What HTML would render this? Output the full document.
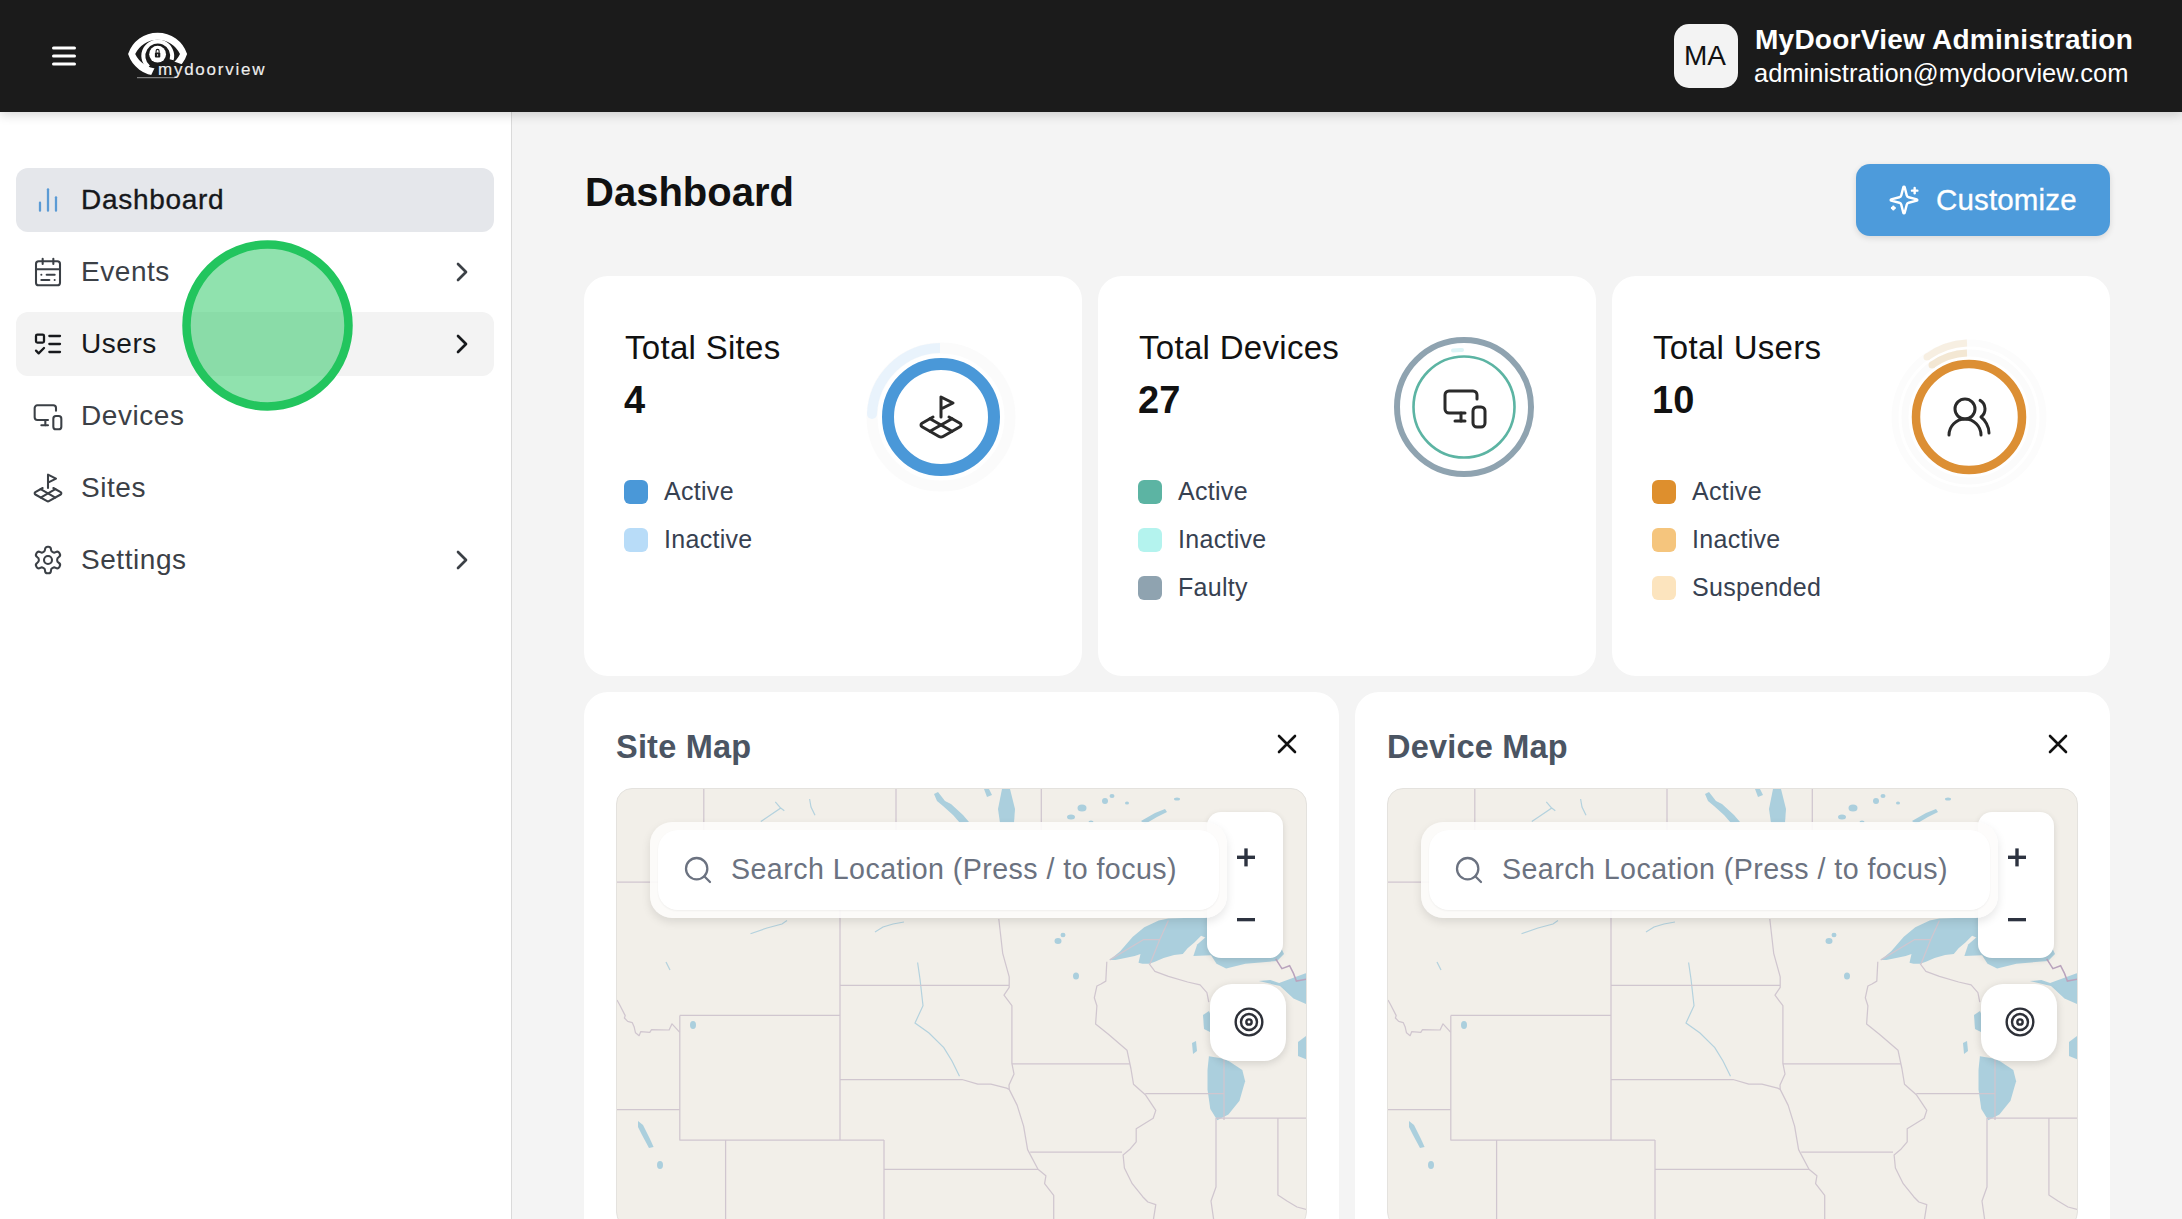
<!DOCTYPE html>
<html><head><meta charset="utf-8">
<style>
*{box-sizing:border-box;margin:0;padding:0}
html,body{width:2182px;height:1219px;overflow:hidden;background:#f4f4f4;font-family:"Liberation Sans",sans-serif}
.a{position:absolute}
.t{position:absolute;line-height:1;white-space:nowrap}
#hdr{left:0;top:0;width:2182px;height:112px;background:#1b1b1b;z-index:5;box-shadow:0 3px 10px rgba(0,0,0,.16)}
#side{left:0;top:112px;width:512px;height:1107px;background:#fff;border-right:1px solid #dadada}
.nav{left:16px;width:478px;height:64px;border-radius:12px}
.nt{font-size:28px;color:#3b4046;left:81px;letter-spacing:0.55px}
.card{background:#fff;border-radius:24px}
.ct{font-size:33px;color:#111;letter-spacing:0.3px}
.num{font-size:38px;font-weight:700;color:#111}
.sq{position:absolute;width:24px;height:24px;border-radius:6px}
.lg{font-size:25px;color:#374151;letter-spacing:0.3px}
.ic{fill:none;stroke-linecap:round;stroke-linejoin:round}
.ic *{fill:none;stroke-linecap:round;stroke-linejoin:round}
.map{position:absolute;top:788px;width:691px;height:440px;border-radius:16px;overflow:hidden;background:#f2efe9;border:1px solid #e4e2de}
.srch-o{position:absolute;top:822px;width:577px;height:96px;border-radius:22px;background:rgba(253,252,251,.9);box-shadow:0 4px 10px rgba(0,0,0,.10)}
.srch-i{position:absolute;top:830px;width:561px;height:80px;border-radius:20px;background:#fff;box-shadow:0 1px 2px rgba(0,0,0,.05)}
.zoom{position:absolute;top:812px;width:76px;height:146px;border-radius:14px;background:#fff;box-shadow:0 2px 6px rgba(0,0,0,.12)}
.loc{position:absolute;top:984px;width:76px;height:77px;border-radius:22px;background:#fff;box-shadow:0 2px 8px rgba(0,0,0,.14)}
.ph{font-size:28.6px;color:#6b7280;letter-spacing:0.45px;top:855px}
</style></head><body>

<!-- HEADER -->
<div id="hdr" class="a">
  <svg class="a" style="left:50px;top:45px" width="28" height="22" viewBox="0 0 28 22">
    <g stroke="#fff" stroke-width="3" stroke-linecap="round"><line x1="3.5" y1="3" x2="24.5" y2="3"/><line x1="3.5" y1="11" x2="24.5" y2="11"/><line x1="3.5" y1="19" x2="24.5" y2="19"/></g>
  </svg>
  <!-- logo -->
  <svg class="a" style="left:0;top:0" width="300" height="111" viewBox="0 0 300 111">
    <path fill="#fff" fill-rule="evenodd" d="M128.1 54.1 A31 31 0 0 1 187.1 54.1 A31 31 0 0 1 128.1 54.1 Z M135.2 54.1 A24.7 24.7 0 0 1 180 54.1 A24.7 24.7 0 0 1 135.2 54.1 Z"/>
    <path fill="#1b1b1b" d="M150.5 76.5 L155.5 66 L174 61.5 L182.5 64.5 L177 80 Z"/>
    <path fill="none" stroke="#fff" stroke-width="4" d="M148.6 67 A14.4 14.4 0 1 1 171.6 59.8"/>
    <circle cx="157.6" cy="54.2" r="8.4" fill="#fff"/>
    <rect x="154.9" y="52.4" width="5.4" height="5.2" rx="1" fill="#1b1b1b"/>
    <path d="M156.1 52.8 V50.9 a1.5 1.5 0 0 1 3 0 V52.8" fill="none" stroke="#1b1b1b" stroke-width="1.1"/>
    <line x1="157.6" y1="54.1" x2="157.6" y2="56.2" stroke="#fff" stroke-width="0.8"/>
    <line x1="137" y1="77.6" x2="175" y2="77.6" stroke="#7d7d7d" stroke-width="1.3"/>
  </svg>
  <div class="t" style="left:158px;top:60.5px;font-size:17px;color:#eeeeee;letter-spacing:1.75px;-webkit-text-stroke:0.15px #eeeeee">mydoorview</div>

  <div class="a" style="left:1674px;top:24px;width:64px;height:64px;border-radius:15px;background:#f3f3f3"></div>
  <div class="t" style="left:1684px;top:42px;font-size:28px;color:#111">MA</div>
  <div class="t" style="left:1755px;top:26px;font-size:28px;font-weight:700;color:#fff;letter-spacing:0.25px">MyDoorView Administration</div>
  <div class="t" style="left:1754px;top:61px;font-size:25.5px;color:#fff">administration@mydoorview.com</div>
</div>

<!-- SIDEBAR -->
<div id="side" class="a"></div>
<div class="a nav" style="top:168px;background:#e5e7eb"></div>
<div class="a nav" style="top:312px;background:#f3f3f3"></div>
<div class="t nt" style="top:186px;color:#16181b;letter-spacing:0.7px;-webkit-text-stroke:0.35px #16181b">Dashboard</div>
<div class="t nt" style="top:258px">Events</div>
<div class="t nt" style="top:330px;color:#17191c">Users</div>
<div class="t nt" style="top:402px">Devices</div>
<div class="t nt" style="top:474px">Sites</div>
<div class="t nt" style="top:546px">Settings</div>

<!-- MAIN -->
<div class="t" style="left:585px;top:172px;font-size:40px;font-weight:700;color:#111">Dashboard</div>
<div class="a" style="left:1856px;top:164px;width:254px;height:72px;border-radius:14px;background:#4d9bdb;box-shadow:0 2px 6px rgba(0,0,0,.12)"></div>
<div class="t" style="left:1936px;top:185px;font-size:29.5px;color:#fff;letter-spacing:0.15px;-webkit-text-stroke:0.3px #fff">Customize</div>

<div class="a card" style="left:584px;top:276px;width:498px;height:400px"></div>
<div class="a card" style="left:1098px;top:276px;width:498px;height:400px"></div>
<div class="a card" style="left:1612px;top:276px;width:498px;height:400px"></div>

<div class="t ct" style="left:625px;top:331px">Total Sites</div>
<div class="t num" style="left:624px;top:381px">4</div>
<div class="t ct" style="left:1139px;top:331px">Total Devices</div>
<div class="t num" style="left:1138px;top:381px">27</div>
<div class="t ct" style="left:1653px;top:331px">Total Users</div>
<div class="t num" style="left:1652px;top:381px">10</div>

<div class="sq" style="left:624px;top:480px;background:#4a98d8"></div>
<div class="sq" style="left:624px;top:528px;background:#b8dcf8"></div>
<div class="t lg" style="left:664px;top:479px">Active</div>
<div class="t lg" style="left:664px;top:527px">Inactive</div>

<div class="sq" style="left:1138px;top:480px;background:#5cb4a3"></div>
<div class="sq" style="left:1138px;top:528px;background:#b4f3ee"></div>
<div class="sq" style="left:1138px;top:576px;background:#8fa3b0"></div>
<div class="t lg" style="left:1178px;top:479px">Active</div>
<div class="t lg" style="left:1178px;top:527px">Inactive</div>
<div class="t lg" style="left:1178px;top:575px">Faulty</div>

<div class="sq" style="left:1652px;top:480px;background:#de8f2d"></div>
<div class="sq" style="left:1652px;top:528px;background:#f5c57d"></div>
<div class="sq" style="left:1652px;top:576px;background:#fce4be"></div>
<div class="t lg" style="left:1692px;top:479px">Active</div>
<div class="t lg" style="left:1692px;top:527px">Inactive</div>
<div class="t lg" style="left:1692px;top:575px">Suspended</div>

<!-- MAP CARDS -->
<div class="a card" style="left:584px;top:692px;width:755px;height:600px"></div>
<div class="a card" style="left:1355px;top:692px;width:755px;height:600px"></div>
<div class="t" style="left:616px;top:731px;font-size:32.5px;font-weight:700;color:#4b5563;letter-spacing:0.2px">Site Map</div>
<div class="t" style="left:1387px;top:731px;font-size:32.5px;font-weight:700;color:#4b5563;letter-spacing:0.2px">Device Map</div>

<div class="map" style="left:616px"><svg width="691" height="440"><use href="#mapsym"/></svg></div>
<div class="map" style="left:1387px"><svg width="691" height="440"><use href="#mapsym"/></svg></div>

<div class="zoom" style="left:1207px"></div>
<div class="zoom" style="left:1978px"></div>
<div class="loc" style="left:1210px"></div>
<div class="loc" style="left:1981px"></div>
<div class="srch-o" style="left:650px"></div>
<div class="srch-i" style="left:658px"></div>
<div class="srch-o" style="left:1421px"></div>
<div class="srch-i" style="left:1429px"></div>
<div class="t ph" style="left:731px">Search Location (Press / to focus)</div>
<div class="t ph" style="left:1502px">Search Location (Press / to focus)</div>

<!-- MAP SYMBOL -->
<svg width="0" height="0" style="position:absolute">
  <symbol id="mapsym" viewBox="0 0 691 440">
    <g fill="#abcfdd" stroke="none">
      <!-- lake superior west -->
      <path d="M492.7 170.9 L503.2 162.2 L515.8 147.8 L527.3 138.2 L541.7 131.4 L551.4 129.5 L600 128 L600 150 L588.9 148.8 L584.1 146.8 L577.4 153.6 L570.6 159.3 L565.8 165.1 L557.1 166.1 L546.6 169 L537.9 172.8 L532.1 174.7 L525.4 174.7 L521.5 173.8 L523.5 165.1 L517.7 167 L508.1 169 L498.4 170.9 Z"/>
      <path d="M576.4 167 L580.2 155.5 L590 147 L600 146 L600 166 Z"/>
      <path d="M590 160 L660 150 L667 165 L660 172 L628.4 174.7 L609.1 179.6 L599.5 174.7 Z"/>
      <!-- lake huron / north channel right edge -->
      <path d="M641.8 192.1 L653.4 191.1 L662.1 194 L688 184.4 L691 184 L691 216 L676.5 209.4 L663 196.9 Z"/>
      <path d="M681 253 L689 247 L691 247 L691 271 L681 267 Z"/>
      <!-- lake michigan -->
      <path d="M591.9 267.2 L608.6 270 L625.3 281.1 L628.1 292.2 L622.5 311.7 L611.4 325.6 L600.3 331.2 L593.3 320 L590.5 300.6 L590.5 281.1 Z"/>
      <path d="M586 226 L592 222 L596 232 L593 243 L587 240 Z"/>
      <path d="M575 254 L579 252 L580 262 L576 265 Z"/>
      <!-- lakes top -->
      <path d="M317 5 L321 3 L328 12 L334 15 L346 26 L352 33 L343 34 L336 26 L326 17 L320 12 Z"/>
      <path d="M385 0 L393 0 L398 20 L397 34 L383 34 L381 20 Z"/>
      <path d="M367 0 L372 0 L375 6 L370 8 Z"/>
      <ellipse cx="465" cy="19" rx="4.5" ry="3.5"/>
      <ellipse cx="454" cy="28" rx="4" ry="2.5"/>
      <path d="M524 32 L538 24 L548 20 L550 23 L540 28 L528 35 Z"/><ellipse cx="495" cy="7" rx="2.5" ry="2"/><ellipse cx="510" cy="14" rx="2" ry="1.6"/><ellipse cx="474" cy="33" rx="2.5" ry="1.5"/><ellipse cx="560" cy="10" rx="3" ry="1.5"/>
      <ellipse cx="488" cy="12" rx="3" ry="3"/>
      <!-- small lakes -->
      <ellipse cx="441" cy="152" rx="3.5" ry="3"/>
      <ellipse cx="446" cy="146" rx="2.5" ry="2.2"/>
      <ellipse cx="459" cy="187" rx="3" ry="3.5"/>
      <path d="M21 332 L26 336 L33 350 L36.6 358 L32 359 L25 346 L21 338 Z"/>
      <ellipse cx="43" cy="376" rx="3" ry="4"/>
      <ellipse cx="76" cy="236" rx="3" ry="4"/>
    </g>
    <g fill="none" stroke="#b4d2de" stroke-width="1.2">
      <path d="M300.6 173.5 L303 190 L306 216.7 L298 234 L312 244 L326.8 258.6 L335 272 L342.5 287.3"/>
      <path d="M133.5 144.7 L150 139 L165 135 L170 131.6"/>
      <path d="M258 143 L266 138 L276 135 L287 133"/>
      <path d="M143.8 32.6 L152 27 L163.7 19.1 L158.3 12.8 M163.7 19.1 L167.3 21.8"/>
      <path d="M192.6 10 L194 18 L198 26.3"/><path d="M49 173 L53 181"/>
    </g>
    <g fill="none" stroke="#d0c6cf" stroke-width="1.25" stroke-linejoin="round">
      <path d="M86.8 0 V60"/>
      <path d="M0 93 H60"/>
      <path d="M279 0 V60"/>
      <path d="M424.3 0 V60"/>
      <path d="M223 90 V351"/>
      <path d="M223 196.3 H392"/>
      <path d="M62.8 226.4 H223 M62.8 226.4 V351 H267"/>
      <path d="M0 211 L2.5 215.5 L8.2 226.6 L7.4 229 L10.7 232.4 L15.2 233.6 L17.2 238.1 L18.5 243.8 L22.1 246.7 L23.8 242.6 L32.8 243.4 L34.5 240.6 L52.1 241 L55 234.8 L62.8 243.4"/>
      <path d="M0 320.6 H62.8"/>
      <path d="M108.6 351 V440"/>
      <path d="M267 351 V440"/>
      <path d="M223 290.5 H345 L360.8 295.2 L373.9 295.2 L389.6 299.1 L392.2 300.4 L400.1 316.1 L406.6 337.1 L410.6 360.6 L421 380.3 L428.9 386.8 L427.6 394.7 L436.7 406.4 L436.7 440"/>
      <path d="M267 380.3 H421"/>
      <path d="M381.8 130 L385.7 164.3 L392.2 187.9 L392.2 198.4 L387 206.2 L394.9 216.7 L394.9 274.3 L397 285 L392 296 L392.2 300.4"/>
      <path d="M394.9 274.8 H513"/>
      <path d="M413.2 363.2 H505"/>
      <path d="M489.8 172.8 L488.8 192.1 L484 195 L479.9 197 L477.3 208.8 L479.9 216.7 L478.6 235 L491.7 245.5 L510 261.2 L513.9 279.5 L516.5 295.2 L528.3 305.7 L538.8 321.4 L536.2 329.2 L519.2 339.7 L519.2 352.8 L512.6 360.6 L506.1 365.9 L507.4 379 L515.2 394.7 L525.7 407.7 L530.9 413 L538.8 415.6 L534.9 440"/>
      <path d="M528.3 304.7 H607"/>
      <path d="M532.1 174.7 L537.9 182.4 L551.4 187.3 L570.6 193 L583.1 195.9 L589.9 203.6 L591.8 213.2"/>
      <path d="M599 329 H691"/>
      <path d="M599 329 V398 L594 412 L598 440"/>
      <path d="M660.9 329 V406 L670 412 L680 418 L691 421"/>
      <path d="M607 270 V331"/>
      <path d="M492.7 170.9 L526.3 150.7 H542.7 L533.1 174.7 M551.4 131.4 L542.7 150.7"/>
    </g>
    <path d="M658.7 169.9 L664.9 179.6 L672.6 176.7 L676.5 184.4 L679.4 192.1 L691 190" fill="none" stroke="#b9a3bd" stroke-width="1.5"/>
  </symbol>
</svg>

<!-- ICON / CHART OVERLAY -->
<svg class="a" style="left:0;top:0;pointer-events:none" width="2182" height="1219" viewBox="0 0 2182 1219">
  <defs>
    <g id="i-search"><circle cx="11" cy="11" r="8"/><path d="m21 21-4.3-4.3"/></g>
    <g id="i-target"><circle cx="12" cy="12" r="10"/><circle cx="12" cy="12" r="6"/><circle cx="12" cy="12" r="2"/></g>
    <g id="i-plot"><path d="m12 8 6-3-6-3v10"/><path d="m8 11.99-5.5 3.14a1 1 0 0 0 0 1.74l8.5 4.86a2 2 0 0 0 2 0l8.5-4.86a1 1 0 0 0 0-1.74L16 12"/><path d="m6.49 12.85 11.02 6.3"/><path d="M17.51 12.85 6.5 19.150"/></g>
    <g id="i-dev"><path d="M18 8V6a2 2 0 0 0-2-2H4a2 2 0 0 0-2 2v7a2 2 0 0 0 2 2h8"/><path d="M10 19v-3.96 3.15"/><path d="M7 19h5"/><rect width="6" height="10" x="16" y="12" rx="2"/></g>
    <g id="i-chev"><path d="m9 18 6-6-6-6"/></g>
  </defs>
  <!-- sidebar icons -->
  <g class="ic" transform="translate(32 184) scale(1.3333)" stroke="#5b9bd5" stroke-width="1.7"><line x1="18" x2="18" y1="20" y2="10"/><line x1="12" x2="12" y1="20" y2="4"/><line x1="6" x2="6" y1="20" y2="14"/></g>
  <g class="ic" transform="translate(32 256) scale(1.3333)" stroke="#3b4046" stroke-width="1.55"><rect width="18" height="18" x="3" y="4" rx="2"/><path d="M3 10h18"/><path d="M16 2v4"/><path d="M17 14h-6"/><path d="M13 18H7"/><path d="M7 14h.01"/><path d="M17 18h.01"/><path d="M8 2v4"/></g>
  <g class="ic" transform="translate(32 328) scale(1.3333)" stroke="#17191c" stroke-width="1.7"><rect x="3" y="5" width="6" height="6" rx="1"/><path d="m3 17 2 2 4-4"/><path d="M13 6h8"/><path d="M13 12h8"/><path d="M13 18h8"/></g>
  <use class="ic" href="#i-dev" transform="translate(32 400) scale(1.3333)" stroke="#3b4046" stroke-width="1.55"/>
  <use class="ic" href="#i-plot" transform="translate(32 472) scale(1.3333)" stroke="#3b4046" stroke-width="1.55"/>
  <g class="ic" transform="translate(32 544) scale(1.3333)" stroke="#3b4046" stroke-width="1.55"><path d="M12.22 2h-.44a2 2 0 0 0-2 2v.18a2 2 0 0 1-1 1.730l-.43.25a2 2 0 0 1-2 0l-.15-.08a2 2 0 0 0-2.73.73l-.22.38a2 2 0 0 0 .73 2.73l.15.1a2 2 0 0 1 1 1.72v.51a2 2 0 0 1-1 1.74l-.15.09a2 2 0 0 0-.73 2.73l.22.38a2 2 0 0 0 2.73.73l.15-.08a2 2 0 0 1 2 0l.43.25a2 2 0 0 1 1 1.73V20a2 2 0 0 0 2 2h.44a2 2 0 0 0 2-2v-.18a2 2 0 0 1 1-1.73l.43-.25a2 2 0 0 1 2 0l.15.08a2 2 0 0 0 2.73-.73l.22-.39a2 2 0 0 0-.73-2.73l-.15-.08a2 2 0 0 1-1-1.74v-.5a2 2 0 0 1 1-1.74l.15-.09a2 2 0 0 0 .73-2.73l-.22-.38a2 2 0 0 0-2.73-.73l-.15.08a2 2 0 0 1-2 0l-.43-.25a2 2 0 0 1-1-1.73V4a2 2 0 0 0-2-2z"/><circle cx="12" cy="12" r="3"/></g>
  <use class="ic" href="#i-chev" transform="translate(446 256) scale(1.3333)" stroke="#3b4046" stroke-width="2"/>
  <use class="ic" href="#i-chev" transform="translate(446 328) scale(1.3333)" stroke="#17191c" stroke-width="2"/>
  <use class="ic" href="#i-chev" transform="translate(446 544) scale(1.3333)" stroke="#3b4046" stroke-width="2"/>

  <!-- customize sparkles -->
  <g class="ic" transform="translate(1888 184) scale(1.3333)" stroke="#fff" stroke-width="1.8"><path d="M9.937 15.5A2 2 0 0 0 8.5 14.063l-6.135-1.582a.5.5 0 0 1 0-.962L8.5 9.936A2 2 0 0 0 9.937 8.5l1.582-6.135a.5.5 0 0 1 .963 0L14.063 8.5A2 2 0 0 0 15.5 9.937l6.135 1.581a.5.5 0 0 1 0 .964L15.5 14.063a2 2 0 0 0-1.437 1.437l-1.582 6.135a.5.5 0 0 1-.963 0z"/><path d="M20 3v4"/><path d="M22 5h-4"/><path d="M4 17v2"/><path d="M5 18H3"/></g>

  <!-- chart 1 -->
  <circle cx="941" cy="417" r="69" fill="none" stroke="#fbfbfb" stroke-width="11"/>
  <path d="M872 414 A69 69 0 0 1 940 348" fill="none" stroke="#e9f3fc" stroke-width="10"/><circle cx="872" cy="414" r="5" fill="#e9f3fc"/>
  <circle cx="941" cy="417" r="53" fill="none" stroke="#4a98d8" stroke-width="12"/>
  <use class="ic" href="#i-plot" transform="translate(917 393) scale(2)" stroke="#2a2a2a" stroke-width="1.5"/>

  <!-- chart 2 -->
  <circle cx="1464" cy="407" r="67" fill="none" stroke="#8fa3b0" stroke-width="6"/>
  <circle cx="1464" cy="407" r="50.5" fill="none" stroke="#5cb4a3" stroke-width="2.6"/>
  <path d="M1453 350.5 A57 57 0 0 1 1462 350" fill="none" stroke="#ddf5f7" stroke-width="4" stroke-linecap="round"/>
  <use class="ic" href="#i-dev" transform="translate(1441 383) scale(2)" stroke="#2a2a2a" stroke-width="1.5"/>

  <!-- chart 3 -->
  <circle cx="1969" cy="417" r="64" fill="none" stroke="#fbfbfb" stroke-width="7"/>
  <circle cx="1969" cy="417" r="74" fill="none" stroke="#fcfcfc" stroke-width="7"/>
  <path d="M1932 365 A64 64 0 0 1 1967 353" fill="none" stroke="#f3e7d3" stroke-width="7"/><circle cx="1932" cy="365" r="3.5" fill="#f3e7d3"/>
  <path d="M1927 357 A74 74 0 0 1 1967 343" fill="none" stroke="#f7efe2" stroke-width="7"/><circle cx="1927" cy="357" r="3.5" fill="#f7efe2"/>
  <circle cx="1969" cy="417" r="53" fill="none" stroke="#dc8f34" stroke-width="8.5"/>
  <g class="ic" transform="translate(1945 393) scale(2)" stroke="#2a2a2a" stroke-width="1.5"><path d="M18 21a8 8 0 0 0-16 0"/><circle cx="10" cy="8" r="5"/><path d="M22 20c0-3.370-2-6.5-4-8a5 5 0 0 0-.45-8.3"/></g>

  <!-- map card close X -->
  <g stroke="#111" stroke-width="2.6" stroke-linecap="round"><path d="M1279 736 L1295 752 M1295 736 L1279 752"/><path d="M2050 736 L2066 752 M2066 736 L2050 752"/></g>
  <!-- search icons -->
  <use class="ic" href="#i-search" transform="translate(682 854) scale(1.3333)" stroke="#6b7280" stroke-width="1.7"/>
  <use class="ic" href="#i-search" transform="translate(1453 854) scale(1.3333)" stroke="#6b7280" stroke-width="1.7"/>
  <!-- zoom plus/minus -->
  <g fill="#2d3340"><rect x="1237" y="855.6" width="18" height="3.4"/><rect x="1244.3" y="848.4" width="3.4" height="18"/><rect x="1237" y="918" width="18" height="3.3"/>
  <rect x="2008" y="855.6" width="18" height="3.4"/><rect x="2015.3" y="848.4" width="3.4" height="18"/><rect x="2008" y="918" width="18" height="3.3"/></g>
  <!-- target icons -->
  <use class="ic" href="#i-target" transform="translate(1233 1006) scale(1.3333)" stroke="#2d3038" stroke-width="1.8"/>
  <use class="ic" href="#i-target" transform="translate(2004 1006) scale(1.3333)" stroke="#2d3038" stroke-width="1.8"/>

  <!-- click indicator -->
  <circle cx="267.5" cy="325.5" r="81" fill="rgba(34,197,94,0.5)" stroke="#22c55e" stroke-width="8.5"/>
</svg>
</body></html>
